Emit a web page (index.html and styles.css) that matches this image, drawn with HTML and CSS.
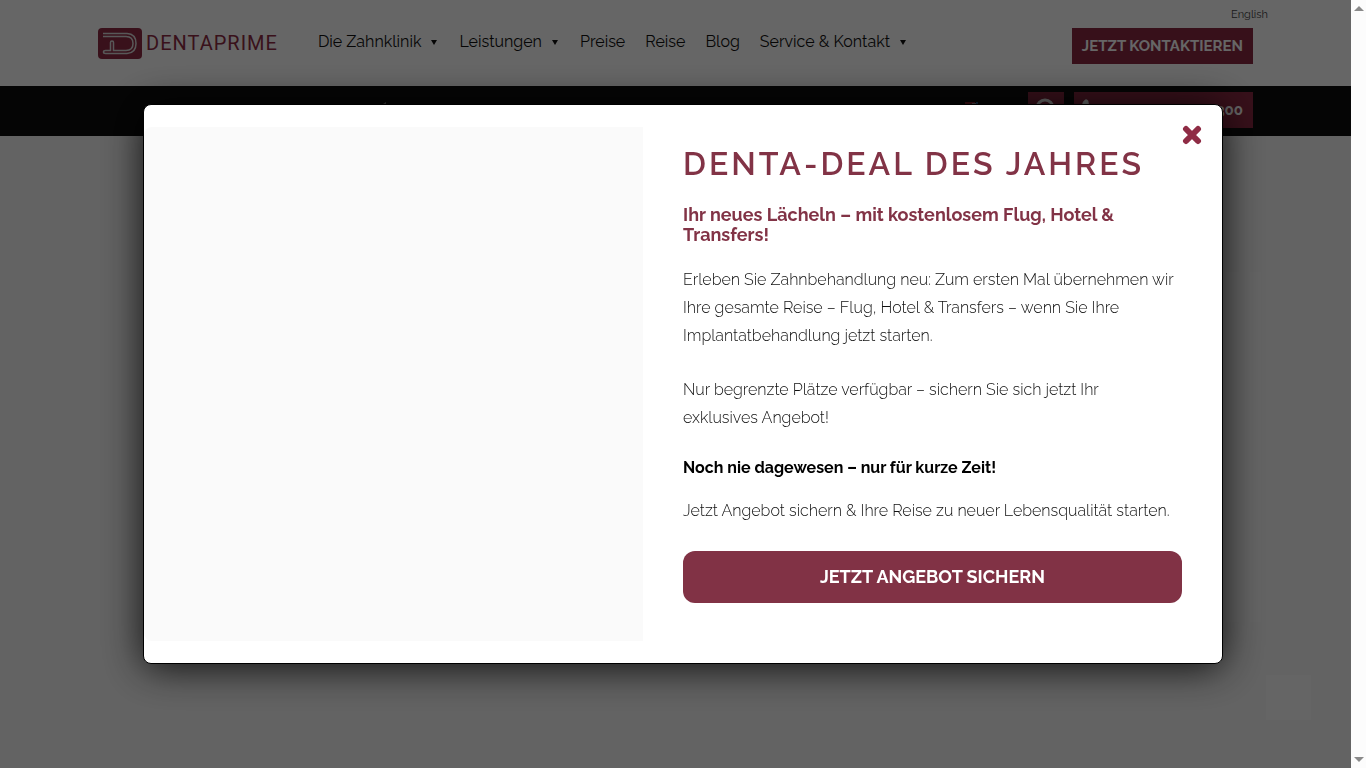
FILE: index.html
```html
<!DOCTYPE html>
<html lang="de">
<head>
<meta charset="utf-8">
<meta name="viewport" content="width=device-width, initial-scale=1">
<title>Dentaprime</title>
<link rel="stylesheet" href="styles.css">
</head>
<body>
<div class="page">
  <header class="header">
    <a class="logo" href="#" aria-label="Dentaprime">
      <svg class="logo-mark" viewBox="0 0 44 31" aria-hidden="true">
        <rect width="44" height="31" rx="4" fill="#8f2c45"/>
        <path d="M5 5.500H29Q38 6 38 15.500T29 25.500H7.500Q5.500 25.500 5.500 24T7.500 22.500H12.500V14.500Q12.500 13 14 13T15.500 14.500V22.500H28Q35 22.500 35 15.500T28 8.500H5" fill="none" stroke="#ddd" stroke-width="1.500"/>
      </svg>
      <span class="logo-text">DENTAPRIME</span>
    </a>
    <nav class="nav">
      <a class="has-menu" href="#">Die Zahnklinik</a>
      <a class="has-menu" href="#">Leistungen</a>
      <a href="#">Preise</a>
      <a href="#">Reise</a>
      <a href="#">Blog</a>
      <a class="has-menu" href="#">Service &amp; Kontakt</a>
    </nav>
    <div class="actions">
      <a class="language" href="#">English</a>
      <a class="contact" href="#">JETZT KONTAKTIEREN</a>
    </div>
  </header>
  <div class="bar">
    <svg class="bar-mark" viewBox="0 0 14 12" aria-hidden="true"><path d="M1 7 7 2 10 0V3L7 7Z" fill="#888"/></svg>
    <svg class="bar-flag" viewBox="0 0 14 12" aria-hidden="true"><path d="M0 0H10V2H0Z" fill="#9b2432"/><path d="M7 1H12V2H7Z" fill="#aaa"/><path d="M11 0H13V2H11Z" fill="#28649b"/></svg>
    <button class="search" type="button" aria-label="Suche">
      <svg viewBox="0 0 24 24" aria-hidden="true"><circle cx="11" cy="10" r="8" fill="none" stroke="#fff" stroke-width="3"/><path d="m17 16 6 6" stroke="#fff" stroke-width="4"/></svg>
    </button>
    <a class="phone" href="#">
      <svg viewBox="0 0 24 24" aria-hidden="true"><path d="M4 1Q6-1 8 2L9 8 7 10Q10 15 15 18L18 16 23 19Q23 24 18 24 4 21 1 7 1 3 4 1Z" fill="#fff"/></svg>
      <span>300</span>
    </a>
  </div>
  <main class="content">
    <div class="hero"></div>
    <button class="to-top" type="button" aria-label="Nach oben"></button>
  </main>
</div>
<div class="overlay">
  <section class="modal" role="dialog" aria-modal="true" aria-labelledby="deal-title">
    <div class="media"></div>
    <div class="offer">
      <h1 id="deal-title">DENTA-DEAL DES JAHRES</h1>
      <h2>Ihr neues Lächeln – mit kostenlosem Flug, Hotel &amp; Transfers!</h2>
      <p class="intro">Erleben Sie Zahnbehandlung neu: Zum ersten Mal übernehmen wir Ihre gesamte Reise – Flug, Hotel &amp; Transfers – wenn Sie Ihre Implantatbehandlung jetzt starten.</p>
      <p class="limited">Nur begrenzte Plätze verfügbar – sichern Sie sich jetzt Ihr exklusives Angebot!</p>
      <p class="urgent">Noch nie dagewesen – nur für kurze Zeit!</p>
      <p class="closing">Jetzt Angebot sichern &amp; Ihre Reise zu neuer Lebensqualität starten.</p>
      <a class="cta" href="#">JETZT ANGEBOT SICHERN</a>
    </div>
    <button class="close" type="button" aria-label="Schließen">
      <svg viewBox="0 0 20 20" aria-hidden="true"><path d="m4 4 12 12M16 4 4 16" fill="none" stroke="#8f2c45" stroke-width="6" stroke-linecap="round"/></svg>
    </button>
  </section>
</div>
<div class="scrollbar" aria-hidden="true">
  <svg viewBox="0 0 10 5"><path d="M5 0 10 5H0Z" fill="#8a8a8a"/></svg>
  <svg viewBox="0 0 10 5"><path d="M0 0H10L5 5Z" fill="#8a8a8a"/></svg>
</div>
</body>
</html>
```
FILE: styles.css
```css
* { box-sizing: border-box; }

body {
  margin: 0;
  font-family: Raleway, "Open Sans", sans-serif;
  font-size: 16px;
  color: #111;
  background: #f8f8f8;
}

a { color: inherit; text-decoration: none; }
button { padding: 0; border: 0; font: inherit; cursor: pointer; }
svg { display: block; }

.page {
  display: flex;
  flex-direction: column;
  min-height: 100vh;
  margin-right: 15px;
}

.header {
  display: flex;
  align-items: flex-start;
  height: 86px;
  padding: 0 83px 0 98px;
  background: #fff;
}

.logo {
  display: flex;
  align-items: center;
  gap: 4px;
  margin: 28px 40px 0 0;
  color: #8f2c45;
}
.logo-mark { width: 44px; height: 31px; }
.logo-text {
  font: 400 20px/31px Roboto, sans-serif;
  letter-spacing: 1px;
}

.nav {
  display: flex;
  gap: 20px;
  margin-top: 30px;
  line-height: 24px;
  white-space: nowrap;
}
.has-menu { display: flex; align-items: center; gap: 10px; }
.has-menu::after {
  content: "";
  margin-right: 2px;
  border: 3px solid transparent;
  border-top: 5px solid #111;
  border-bottom: 0;
}

.actions {
  display: flex;
  flex-direction: column;
  align-items: flex-end;
  gap: 5px;
  margin-left: auto;
  padding-top: 7px;
}
.language { font-size: 11px; line-height: 16px; color: #444; }
.contact {
  margin-right: 15px;
  padding: 0 10px;
  background: #8a2942;
  color: #fff;
  font-size: 15px;
  font-weight: 700;
  line-height: 36px;
}

.bar {
  display: flex;
  align-items: flex-start;
  gap: 10px;
  height: 50px;
  padding: 6px 98px 0 376px;
  background: #0d0d0d;
}
.bar-mark, .bar-flag { width: 14px; height: 12px; margin-top: 10px; }
.bar-flag { margin-left: auto; margin-right: 39px; }
.search {
  display: grid;
  place-items: center;
  width: 36px;
  height: 36px;
  background: #8a2942;
}
.search svg { width: 24px; height: 24px; }
.phone {
  display: flex;
  align-items: center;
  justify-content: space-between;
  width: 179px;
  height: 36px;
  padding: 0 10px 0 7px;
  background: #8a2942;
  color: #fff;
  font-size: 15px;
  font-weight: 700;
}
.phone svg { width: 22px; height: 24px; }

.content {
  display: flex;
  flex-direction: column;
  flex: 1;
  padding: 136px 40px 48px 150px;
}
.hero { height: 350px; margin-right: 50px; background: #fafafa; }
.to-top {
  width: 45px;
  height: 45px;
  margin: auto 0 0 auto;
  background: #fdfdfd;
}

.overlay {
  position: fixed;
  inset: 0;
  display: grid;
  place-items: center;
  padding: 16px;
  background: rgba(0, 0, 0, .6);
}
.modal {
  position: relative;
  display: grid;
  grid-template-columns: 1fr 1fr;
  width: 100%;
  max-width: 1080px;
  padding: 22px 0;
  border: 1px solid #000;
  border-radius: 8px;
  background: #fff;
  box-shadow: 0 4px 40px rgba(0, 0, 0, .85);
}
.media {
  margin-right: 40px;
  background: #fafafa;
  border-radius: 8px 0 0 8px;
}
.offer { padding: 16px 40px 38px 0; }

.offer h1 {
  margin: 0 0 20px;
  color: #823346;
  font-size: 32px;
  font-weight: 600;
  line-height: 42px;
  letter-spacing: 3px;
  white-space: nowrap;
}
.offer h2 {
  margin: 0 0 21px;
  color: #823346;
  font-size: 18px;
  font-weight: 700;
  line-height: 20px;
}
.offer p { margin: 0; line-height: 28px; }
.offer .intro, .offer .limited, .offer .closing { font-weight: 300; }
.offer .intro { margin-bottom: 26px; }
.offer .limited { max-width: 480px; margin-bottom: 22px; }
.offer .urgent { margin-bottom: 15px; color: #000; font-weight: 700; }
.offer .closing { margin-bottom: 26px; }
.cta {
  display: block;
  border-radius: 12px;
  background: #813245;
  color: #fff;
  font-size: 18px;
  font-weight: 700;
  line-height: 52px;
  text-align: center;
}
.close {
  position: absolute;
  top: 20px;
  right: 20px;
  background: none;
}
.close svg { width: 20px; height: 20px; }

.scrollbar {
  position: fixed;
  inset: 0 0 0 auto;
  display: flex;
  flex-direction: column;
  align-items: center;
  justify-content: space-between;
  width: 15px;
  padding: 6px 0;
  background: #fcfcfc;
}
.scrollbar svg { width: 10px; height: 5px; }
```
